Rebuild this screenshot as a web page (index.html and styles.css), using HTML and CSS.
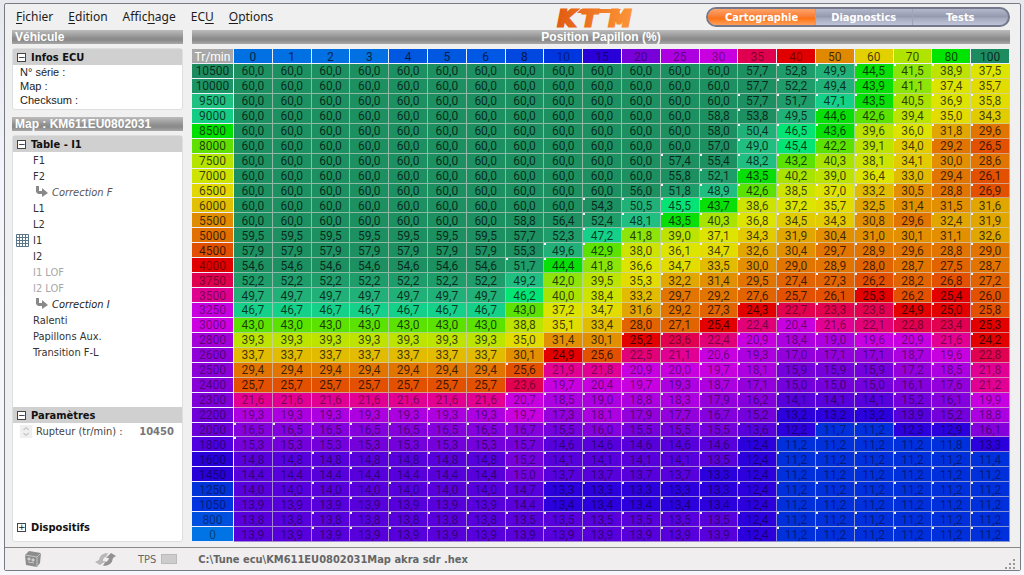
FILE: index.html
```html
<!DOCTYPE html>
<html lang="fr">
<head>
<meta charset="utf-8">
<title>Cartographie</title>
<link rel="stylesheet" href="styles.css">
</head>
<body>
<div class="window">
  <header class="topbar">
    <nav class="menu">
      <button type="button"><u>F</u>ichier</button>
      <button type="button"><u>E</u>dition</button>
      <button type="button">Affic<u>h</u>age</button>
      <button type="button">EC<u>U</u></button>
      <button type="button"><u>O</u>ptions</button>
    </nav>
    <svg class="logo" width="90" height="26" viewBox="0 0 90 26" role="img" aria-label="KTM">
      <defs>
        <linearGradient id="orange" gradientUnits="userSpaceOnUse" x1="0" y1="0" x2="84" y2="0">
          <stop offset="0" stop-color="#e05a10"/>
          <stop offset="1" stop-color="#ff9a3c"/>
        </linearGradient>
      </defs>
      <path d="M26 5H66L63 9H22Z" fill="url(#orange)"/>
      <text class="logo-text" x="3 27 54" y="22" fill="url(#orange)" stroke="url(#orange)" stroke-width="3">KTM</text>
    </svg>
    <div class="tabs">
      <button type="button" class="tab active">Cartographie</button>
      <button type="button" class="tab">Diagnostics</button>
      <button type="button" class="tab">Tests</button>
    </div>
  </header>

  <main class="content">
    <aside class="side">
      <h2 class="bar">Véhicule</h2>
      <section class="panel infos">
        <button type="button" class="group"><span class="box">−</span>Infos ECU</button>
        <p>N° série :</p>
        <p>Map :</p>
        <p>Checksum :</p>
      </section>
      <h2 class="bar">Map : KM611EU0802031</h2>
      <section class="panel tree">
        <button type="button" class="group"><span class="box">−</span>Table - I1</button>
        <ul class="items">
          <li><button type="button">F1</button></li>
          <li><button type="button">F2</button></li>
          <li><button type="button" class="sub"><svg width="13" height="12" viewBox="0 0 13 12"><path d="M1 0H4V5H7V2L13 7L7 11V8H3L1 6Z" fill="#888"/></svg>Correction F</button></li>
          <li><button type="button">L1</button></li>
          <li><button type="button">L2</button></li>
          <li><button type="button" class="current"><svg width="13" height="13" viewBox="0 0 13 13"><path d="M.5.5H12.5V12.5H.5ZM3.5 0V13M6.5 0V13M9.5 0V13M0 3.5H13M0 6.5H13M0 9.5H13" fill="none" stroke="#5a7488"/></svg>I1</button></li>
          <li><button type="button">I2</button></li>
          <li><button type="button" disabled>I1 LOF</button></li>
          <li><button type="button" disabled>I2 LOF</button></li>
          <li><button type="button" class="sub dark"><svg width="13" height="12" viewBox="0 0 13 12"><path d="M1 0H4V5H7V2L13 7L7 11V8H3L1 6Z" fill="#888"/></svg>Correction I</button></li>
          <li><button type="button">Ralenti</button></li>
          <li><button type="button">Papillons Aux.</button></li>
          <li><button type="button">Transition F-L</button></li>
        </ul>
        <div class="params">
          <button type="button" class="group"><span class="box">−</span>Paramètres</button>
          <div class="field">
            <svg width="12" height="13" viewBox="0 0 12 13"><path d="M0 0H12V13H0Z" fill="#efefef"/><path d="M3.500 5L6 2.500L8.500 5M3.500 8L6 10.500L8.500 8" fill="none" stroke="#aaa"/></svg>
            <label for="rupteur">Rupteur (tr/min) :</label>
            <input id="rupteur" type="text" value="10450">
          </div>
        </div>
        <button type="button" class="group closed"><span class="box">+</span>Dispositifs</button>
      </section>
    </aside>

    <section class="chart">
      <h2 class="bar center">Position Papillon (%)</h2>
      <table class="map">
        <thead id="map-head"></thead>
        <tbody id="map-body"></tbody>
      </table>
    </section>
  </main>

  <footer class="status">
    <svg class="ecu" width="18" height="16" viewBox="0 0 18 16"><path d="M1 4L5 0L17 2L16 12L13 16L2 14Z" fill="#8c8c8c"/><path d="M1 4L13 6L17 2M13 6V16" fill="none" stroke="#c4c4c4"/><path d="M4 7H6V9H4ZM8 8H10V10H8ZM4 11L10 12" fill="#ddd" stroke="#c8c8c8"/></svg>
    <svg class="sync" width="22" height="15" viewBox="0 0 22 15"><path d="M0 10L4 8Q5 1 13 1L11 5Q8 5 8 9L11 9L5 13Z" fill="#b8b8b8"/><path d="M21 4L18 6Q17 14 8 14L10 10Q13 10 14 6L11 6L16 1Z" fill="#929292"/></svg>
    <span class="tps">TPS</span><span class="lamp"></span>
    <span class="path">C:\Tune ecu\KM611EU0802031Map akra sdr .hex</span>
    <svg class="grip" width="12" height="12" viewBox="0 0 12 12"><path d="M9 1h2v2h-2zM9 5h2v2h-2zM9 9h2v2h-2zM5 5h2v2h-2zM5 9h2v2h-2zM1 9h2v2h-2z" fill="#999"/></svg>
  </footer>
</div>
<script src="app.js"></script>
</body>
</html>
```

FILE: styles.css
```css
* { box-sizing: border-box; }
html, body { height: 100%; margin: 0; }
body {
  padding: 3px 3px 4px 4px;
  background: linear-gradient(#e6e8ee, #f4f4fa 30%, #f7f7fb);
  font-family: "DejaVu Sans Condensed", "DejaVu Sans", sans-serif;
  font-size: 11px;
  color: #222;
}
button {
  border: 0;
  padding: 0;
  margin: 0;
  background: none;
  font: inherit;
  color: inherit;
  text-align: left;
}
.window {
  display: flex;
  flex-direction: column;
  min-height: 100%;
  border: 1px solid #777c84;
  border-radius: 2px;
  background: #f0f0f0;
}

/* Menu, logo and page tabs */
.topbar {
  display: grid;
  grid-template-columns: 1fr auto 304px;
  align-items: center;
  height: 26px;
  padding: 0 10px 0 11px;
}
.menu {
  display: flex;
  gap: 15px;
  padding-bottom: 2px;
  font: 12px "Noto Sans", sans-serif;
  color: #1c1c1c;
}
.menu u { text-underline-offset: 2px; }
.logo { margin-right: 61px; overflow: visible; }
.logo-text { font: italic bold 22px "DejaVu Sans", sans-serif; }
.tabs {
  display: flex;
  height: 20px;
  border: 2px solid #74788a;
  border-radius: 10px;
  overflow: hidden;
  background: linear-gradient(#b4b8cc, #9498ac 50%, #a4a8bc 55%, #c0c4d8);
}
.tab {
  flex: 1;
  color: #fff;
  font-weight: bold;
  text-align: center;
  border-left: 1px solid #a0a4b4;
}
.tab.active {
  flex: 0 0 107px;
  border: 0;
  background: linear-gradient(#ffa468, #f87c34 50%, #ff7010 55%, #ffa058);
}

/* Columns */
.content {
  flex: 1;
  display: flex;
  gap: 9px;
  padding: 0 10px 5px 7px;
}
.side {
  flex: 0 0 171px;
  min-width: 0;
  display: flex;
  flex-direction: column;
}
.chart {
  flex: 1;
  min-width: 0;
  display: flex;
  flex-direction: column;
}
.bar {
  flex: none;
  margin: 0 0 4px;
  padding: 0 3px;
  height: 14px;
  line-height: 15px;
  font-family: "Liberation Sans", sans-serif;
  font-size: 12px;
  color: #fff;
  background: linear-gradient(#bcbcbc, #8c8c8c 60%, #8c8c8c 75%, #a8a8a8);
}
.center { margin-bottom: 5px; text-align: center; }
.panel {
  background: #fff;
  border: 1px solid #dcdfe2;
  border-radius: 3px;
}
.group {
  display: flex;
  align-items: center;
  gap: 5px;
  width: 100%;
  height: 16px;
  padding-left: 4px;
  font-weight: bold;
  color: #111;
  background: #d0d0d0;
}
.group.closed { background: none; }
.box {
  width: 9px;
  height: 9px;
  border: 1px solid #444;
  background: #fff;
  font: 9px/7px "DejaVu Sans", sans-serif;
  text-align: center;
}
.infos { height: 62px; margin-bottom: 7px; }
.infos p {
  margin: 0;
  padding-left: 7px;
  font-family: "Liberation Sans", sans-serif;
  line-height: 14px;
}
.tree {
  flex: 1;
  display: flex;
  flex-direction: column;
  padding-bottom: 6px;
}
.items {
  list-style: none;
  margin: 0;
  padding: 0 0 0 20px;
}
.items button {
  display: flex;
  align-items: center;
  height: 16px;
  color: #333;
}
.items button:disabled { color: #a8a8a8; }
.items .sub { gap: 4px; padding-left: 2px; font-style: italic; color: #555; }
.items .dark { color: #222; }
.items .current { gap: 4px; margin-left: -17px; }
.params { margin-top: auto; margin-bottom: 80px; }
.field {
  display: flex;
  align-items: center;
  gap: 4px;
  height: 16px;
  padding: 0 8px 0 7px;
  color: #444;
}
.field input {
  flex: 1;
  width: 40px;
  min-width: 0;
  border: 0;
  padding: 0;
  background: none;
  font: bold 10px "DejaVu Sans", sans-serif;
  color: #777;
  text-align: right;
}

/* Value map */
.map {
  flex: 1;
  width: 100%;
  border-collapse: separate;
  border-spacing: 0;
  table-layout: fixed;
  font-family: Roboto, "Liberation Sans", sans-serif;
  font-size: 12px;
  line-height: 12px;
}
.map th, .map td {
  padding: 1px 0 0;
  text-align: center;
  font-weight: normal;
  color: rgba(0, 0, 0, 0.72);
  border-right: 1px solid rgba(205, 205, 205, 0.65);
  border-bottom: 1px solid rgba(205, 205, 205, 0.65);
}
.map th { border-color: #eef; }
.map thead th { height: 15px; padding-top: 2px; }
.map .corner { width: 42px; background: #a8a8a8; color: #fff; }
.map .cold { color: rgba(0, 0, 0, 0.48); }
.map .edited {
  background-image: linear-gradient(#f4f4ff, #f4f4ff);
  background-size: 2px 2px;
  background-repeat: no-repeat;
}

/* Status line */
.status {
  display: flex;
  align-items: center;
  height: 23px;
  padding: 0 4px 0 19px;
  border-top: 1px solid #888;
  background: #f0eeee;
  font-weight: bold;
  color: #666;
}
.ecu { margin-right: 53px; }
.sync { margin-right: 21px; }
.tps { font-weight: normal; margin-right: 5px; }
.lamp {
  width: 16px;
  height: 10px;
  margin-right: 21px;
  border: 1px solid #bbb;
  background: #ccc;
}
.grip { margin-left: auto; align-self: flex-end; }
```

FILE: app.js
```js
const columns = [
  [0, "#0070e2"], [1, "#0070e2"], [2, "#0070e2"], [3, "#0070e2"], [4, "#0058e0"],
  [5, "#0058e0"], [6, "#0058e4"], [8, "#0048e0"], [10, "#0036e0"], [15, "#2a00d8"],
  [20, "#7800d8"], [25, "#ac00e0"], [30, "#c800e0"], [35, "#e00050"], [40, "#e00000"],
  [50, "#e08800"], [60, "#e2d000"], [70, "#b0e400"], [80, "#00e400"], [100, "#1c8c60"]
];

// speed, axis colour, first edited column, value of columns 0 to 6, then the other columns
const rows = [
  [10500, "#1c8c60", 14, 60, "60 60 60 60 60 60 57.7 52.8 49.9 44.5 41.5 38.9 37.5"],
  [10000, "#1c9464", 14, 60, "60 60 60 60 60 60 57.7 52.2 49.4 43.9 41.1 37.4 35.7"],
  [9500, "#20c080", 13, 60, "60 60 60 60 60 60 57.7 51.7 47.1 43.5 40.5 36.9 35.8"],
  [9000, "#14cc84", 13, 60, "60 60 60 60 60 58.8 53.8 49.5 44.6 42.6 39.4 35.0 34.3"],
  [8500, "#00e000", 13, 60, "60 60 60 60 60 58.0 50.4 46.5 43.6 39.6 36.0 31.8 29.6"],
  [8000, "#60e000", 13, 60, "60 60 60 60 60 57.0 49.0 45.4 42.2 39.1 34.0 29.2 26.5"],
  [7500, "#b4e400", 11, 60, "60 60 60 60 57.4 55.4 48.2 43.2 40.3 38.1 34.1 30.0 28.6"],
  [7000, "#cce400", 12, 60, "60 60 60 60 55.8 52.1 43.5 40.2 39.0 36.4 33.0 29.4 26.1"],
  [6500, "#e0d800", 11, 60, "60 60 60 56.0 51.8 48.9 42.6 38.5 37.0 33.2 30.5 28.8 26.9"],
  [6000, "#e0c000", 9, 60, "60 60 54.3 50.5 45.5 43.7 38.6 37.2 35.7 32.5 31.4 31.5 31.6"],
  [5500, "#e08c00", 9, 60, "58.8 56.4 52.4 48.1 43.5 40.3 36.8 34.5 34.3 30.8 29.6 32.4 31.9"],
  [5000, "#e07000", 9, 59.5, "57.7 52.3 47.2 41.8 39.0 37.1 34.3 31.9 30.4 31.0 30.1 31.1 32.6"],
  [4500, "#e05000", 8, 57.9, "55.3 49.6 42.9 38.0 36.1 34.7 32.6 30.4 29.7 28.9 29.6 28.8 29.0"],
  [4000, "#e00000", 7, 54.6, "51.7 44.4 41.8 36.6 34.7 33.5 30.0 29.0 28.9 28.0 28.7 27.5 28.7"],
  [3750, "#e00050", 11, 52.2, "49.2 42.0 39.5 35.3 32.2 31.4 29.5 27.4 27.3 26.2 28.2 26.8 27.2"],
  [3500, "#e00090", 11, 49.7, "46.2 40.0 38.4 33.2 29.7 29.2 27.6 25.7 26.1 25.3 26.2 25.4 26.0"],
  [3250, "#c800e0", 11, 46.7, "43.0 37.2 34.7 31.6 29.2 27.3 24.3 22.7 23.3 23.8 24.9 25.0 25.8"],
  [3000, "#cc00e0", 10, 43, "38.8 35.1 33.4 28.0 27.1 25.4 22.4 20.4 21.6 22.1 22.8 23.4 25.3"],
  [2800, "#a400d8", 10, 39.3, "35.0 31.4 30.1 25.2 23.6 22.4 20.9 18.4 19.0 19.6 20.9 21.6 24.2"],
  [2600, "#9000d8", 8, 33.7, "30.1 24.9 25.6 22.5 21.1 20.6 19.3 17.0 17.1 17.1 18.7 19.6 22.8"],
  [2500, "#8c00d8", 7, 29.4, "25.6 21.9 21.8 20.9 20.0 19.7 18.1 15.9 15.9 15.9 17.2 18.5 21.8"],
  [2400, "#8800d8", 8, 25.7, "23.6 19.7 20.4 19.7 19.3 18.7 17.1 15.0 15.0 15.0 16.1 17.6 21.2"],
  [2300, "#8000d8", 7, 21.6, "20.7 18.5 19.0 18.8 18.3 17.9 16.2 14.1 14.1 14.1 15.2 16.1 19.9"],
  [2200, "#7000d8", 3, 19.3, "19.7 17.3 18.1 17.9 17.7 16.7 15.2 13.2 13.2 13.2 13.9 15.2 18.8"],
  [2000, "#6c00d8", 0, 16.5, "16.7 15.5 16.0 15.5 15.5 15.5 13.6 12.2 11.7 11.2 12.3 12.9 16.1"],
  [1800, "#5000e0", 0, 15.3, "15.7 14.6 14.6 14.6 14.6 14.6 12.4 11.2 11.2 11.2 11.2 11.8 13.3"],
  [1600, "#2800d8", 2, 14.8, "15.2 14.1 14.1 14.1 14.1 13.5 12.4 11.2 11.2 11.2 11.2 11.2 11.4"],
  [1450, "#2800d8", 2, 14.4, "15.0 13.7 13.7 13.7 13.7 13.3 12.4 11.2 11.2 11.2 11.2 11.2 11.2"],
  [1250, "#0034d8", 2, 14, "14.7 13.3 13.3 13.3 13.3 13.3 12.4 11.2 11.2 11.2 11.2 11.2 11.2"],
  [1050, "#0034e0", 2, 13.9, "14.4 13.4 13.4 13.4 13.4 13.4 12.4 11.2 11.2 11.2 11.2 11.2 11.2"],
  [800, "#0050e0", 2, 13.8, "13.5 13.5 13.5 13.5 13.5 13.5 12.4 11.2 11.2 11.2 11.2 11.2 11.2"],
  [0, "#0074e4", 2, 13.9, "13.9 13.9 13.9 13.9 13.9 13.9 12.4 11.2 11.2 11.2 11.2 11.2 11.2"]
];

// lowest value of each colour band
const bands = [
  [53, "#1c9060"], [51, "#1e9c6a"], [49.3, "#20b078"], [48, "#20be80"], [46.6, "#14d088"],
  [45, "#04e474"], [43.4, "#08de08"], [42.1, "#5ce200"], [41, "#8ce408"], [39.8, "#a8e400"],
  [38.7, "#bce400"], [37.8, "#cce400"], [36, "#dce400"], [34.6, "#e2dc00"], [33.9, "#e2cc00"],
  [33, "#e2bc00"], [31.6, "#e2a600"], [30, "#e29000"], [28.6, "#e27400"], [27, "#e26400"],
  [25.5, "#e25000"], [24, "#e20000"], [22.6, "#e20050"], [22, "#e20078"], [21, "#e20094"],
  [19.5, "#c800e0"], [18.1, "#ac00e0"], [17, "#9400dc"], [16, "#8400dc"], [14.9, "#7400dc"],
  [13.5, "#5800dc"], [12, "#2c00dc"], [0, "#0030dc"]
];

function cell(tag, text, colour, names) {
  const node = document.createElement(tag);
  node.textContent = text;
  node.style.backgroundColor = colour;
  node.className = names;
  return node;
}

const head = document.createElement("tr");
head.append(cell("th", "Tr/min", "", "corner"));
for (const [position, colour] of columns) {
  head.append(cell("th", position, colour, position >= 10 && position < 50 ? "cold" : ""));
}
document.getElementById("map-head").append(head);

for (const [speed, colour, edited, low, rest] of rows) {
  const line = document.createElement("tr");
  line.append(cell("th", speed, colour, speed <= 4000 ? "cold" : ""));
  const values = Array(7).fill(low).concat(rest.split(" ").map(Number));
  values.forEach((value, index) => {
    const names = [];
    if (value < 24) names.push("cold");
    if (index >= edited) names.push("edited");
    const band = bands.find(([floor]) => value >= floor);
    line.append(cell("td", value.toFixed(1).replace(".", ","), band[1], names.join(" ")));
  });
  document.getElementById("map-body").append(line);
}
```
